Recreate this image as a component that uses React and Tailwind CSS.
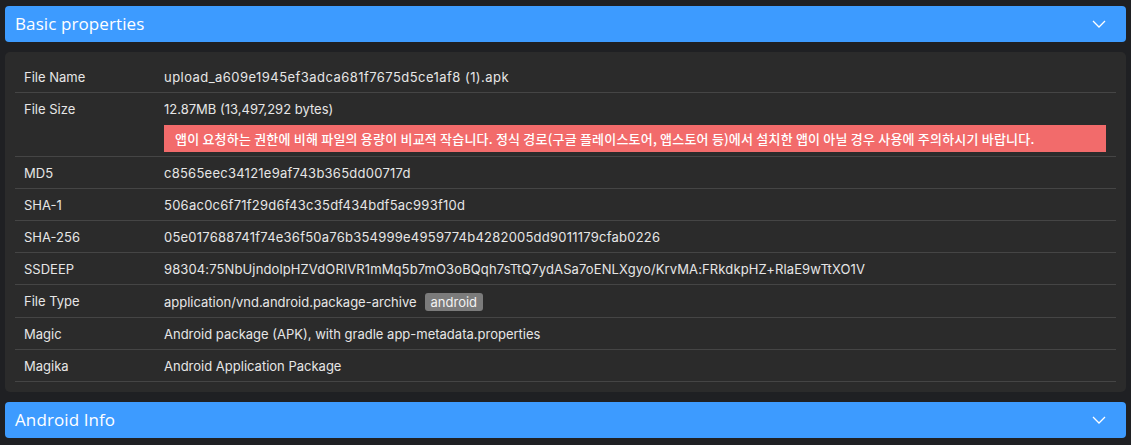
import React from "react";

const rows = [
  { label: "File Name", value: "upload_a609e1945ef3adca681f7675d5ce1af8 (1).apk", track: "tracking-[0.45px]" },
  { label: "File Size", value: "12.87MB (13,497,292 bytes)", warning: "앱이 요청하는 권한에 비해 파일의 용량이 비교적 작습니다. 정식 경로(구글 플레이스토어, 앱스토어 등)에서 설치한 앱이 아닐 경우 사용에 주의하시기 바랍니다." },
  { label: "MD5", value: "c8565eec34121e9af743b365dd00717d", track: "tracking-[0.25px]" },
  { label: "SHA-1", value: "506ac0c6f71f29d6f43c35df434bdf5ac993f10d", track: "tracking-[0.25px]" },
  { label: "SHA-256", value: "05e017688741f74e36f50a76b354999e4959774b4282005dd9011179cfab0226", track: "tracking-[0.23px]" },
  { label: "SSDEEP", value: "98304:75NbUjndolpHZVdORlVR1mMq5b7mO3oBQqh7sTtQ7ydASa7oENLXgyo/KrvMA:FRkdkpHZ+RlaE9wTtXO1V", track: "tracking-[0.12px]" },
  { label: "File Type", value: "application/vnd.android.package-archive", tag: "android" },
  { label: "Magic", value: "Android package (APK), with gradle app-metadata.properties" },
  { label: "Magika", value: "Android Application Package" },
];

const Chevron = () => (
  <svg width="14" height="8" viewBox="0 0 14 8" fill="none" stroke="#ffffff" strokeWidth="1.3">
    <path d="M1 1l6 6 6-6" />
  </svg>
);

const SectionHeader = ({ title }) => (
  <div className="flex items-center justify-between h-[36px] rounded-[4px] bg-[#3d9bff] pl-[10px] pr-[20px]">
    <span className="text-[17px] text-white tracking-[0.1px]" style={{ fontFamily: '"Open Sans", "Noto Sans", sans-serif' }}>{title}</span>
    <Chevron />
  </div>
);

export default function App() {
  return (
    <div className="min-h-screen bg-[#1f2023] px-[5px] pt-[6px] pb-[6px]" style={{ fontFamily: 'Inter, "Noto Sans CJK KR", sans-serif' }}>
      <SectionHeader title="Basic properties" />

      {/* Basic properties table */}
      <div className="mt-[10px] rounded-[5px] bg-[#2b2b2b] px-[10px] pt-[9px] pb-[10px]">
        <table className="w-full border-collapse text-[13px] text-[#e6e6e6]">
          <tbody>
            {rows.map((row) => (
              <tr key={row.label} className="border-b border-[#454545]">
                <td className="w-[149px] pl-[9px] align-top pt-[8px] pb-[6px] leading-[17px]">{row.label}</td>
                <td className="pr-[10px] pt-[8px] pb-[6px] leading-[17px]">
                  <div className="flex items-center">
                    <span className={row.track}>{row.value}</span>
                    {row.tag && (
                      <span className="ml-[8px] rounded-[3px] bg-[#7b7b7b] px-[6px] leading-[18px] text-[#f2f2f2]">{row.tag}</span>
                    )}
                  </div>
                  {row.warning && (
                    <div className="mt-[7px] mb-[-2px] bg-[#f26b6b] pl-[11px] py-[4px] leading-[19px] text-[13px] font-medium tracking-[0.2px] text-white" style={{ fontFamily: '"Noto Sans CJK KR", sans-serif' }}>
                      {row.warning}
                    </div>
                  )}
                </td>
              </tr>
            ))}
          </tbody>
        </table>
      </div>

      <div className="mt-[10px]">
        <SectionHeader title="Android Info" />
      </div>
    </div>
  );
}
